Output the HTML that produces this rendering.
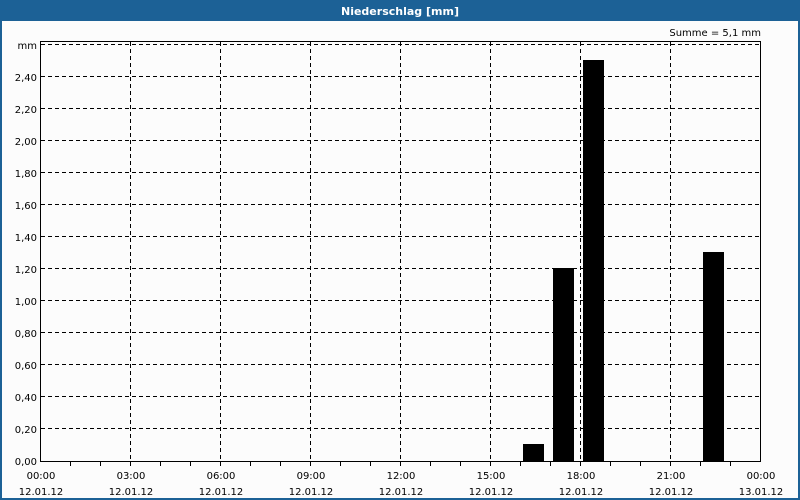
<!DOCTYPE html>
<html><head><style>
body{margin:0;width:800px;height:500px;overflow:hidden;background:#fff;font-family:"DejaVu Sans","Liberation Sans",sans-serif;}
</style></head><body>
<svg width="800" height="500" xmlns="http://www.w3.org/2000/svg" style="display:block">
<rect x="0" y="0" width="800" height="500" fill="#1c6196"/>
<rect x="2" y="21" width="796" height="477" fill="#fcfcfc"/>
<text x="400" y="15" fill="#fff" font-size="11" font-weight="bold" text-anchor="middle" font-family="DejaVu Sans, sans-serif">Niederschlag [mm]</text>
<text x="761" y="36" fill="#000" font-size="10" text-anchor="end">Summe = 5,1 mm</text>
<g stroke="#000" stroke-width="1" stroke-dasharray="4,3" fill="none">
<path d="M41 44.5H760 M41 76.5H760 M41 108.5H760 M41 140.5H760 M41 172.5H760 M41 204.5H760 M41 236.5H760 M41 268.5H760 M41 300.5H760 M41 332.5H760 M41 364.5H760 M41 396.5H760 M41 428.5H760"/>
<path d="M130.5 42V461 M220.5 42V461 M310.5 42V461 M400.5 42V461 M490.5 42V461 M580.5 42V461 M670.5 42V461"/>
</g>
<g fill="#000">
<rect x="523" y="444" width="21" height="17"/>
<rect x="553" y="268" width="21" height="193"/>
<rect x="583" y="60" width="21" height="401"/>
<rect x="703" y="252" width="21" height="209"/>
</g>
<rect x="40.5" y="41.5" width="720" height="420" fill="none" stroke="#000"/>
<g stroke="#000">
<path d="M70.5 461V466 M100.5 461V466 M130.5 461V466 M160.5 461V466 M190.5 461V466 M220.5 461V466 M250.5 461V466 M280.5 461V466 M310.5 461V466 M340.5 461V466 M370.5 461V466 M400.5 461V466 M430.5 461V466 M460.5 461V466 M490.5 461V466 M520.5 461V466 M550.5 461V466 M580.5 461V466 M610.5 461V466 M640.5 461V466 M670.5 461V466 M700.5 461V466 M730.5 461V466"/>
</g>
<g font-size="10" fill="#000" text-anchor="end">
<text x="37" y="49">mm</text>
<text x="37" y="81">2,40</text><text x="37" y="113">2,20</text><text x="37" y="145">2,00</text>
<text x="37" y="177">1,80</text><text x="37" y="209">1,60</text><text x="37" y="241">1,40</text>
<text x="37" y="273">1,20</text><text x="37" y="305">1,00</text><text x="37" y="337">0,80</text>
<text x="37" y="369">0,60</text><text x="37" y="401">0,40</text><text x="37" y="433">0,20</text>
<text x="37" y="465">0,00</text>
</g>
<g font-size="10" fill="#000" text-anchor="middle">
<text x="41" y="479">00:00</text><text x="41" y="495">12.01.12</text>
<text x="131" y="479">03:00</text><text x="131" y="495">12.01.12</text>
<text x="221" y="479">06:00</text><text x="221" y="495">12.01.12</text>
<text x="311" y="479">09:00</text><text x="311" y="495">12.01.12</text>
<text x="401" y="479">12:00</text><text x="401" y="495">12.01.12</text>
<text x="491" y="479">15:00</text><text x="491" y="495">12.01.12</text>
<text x="581" y="479">18:00</text><text x="581" y="495">12.01.12</text>
<text x="671" y="479">21:00</text><text x="671" y="495">12.01.12</text>
<text x="761" y="479">00:00</text><text x="761" y="495">13.01.12</text>
</g>
</svg>
</body></html>
